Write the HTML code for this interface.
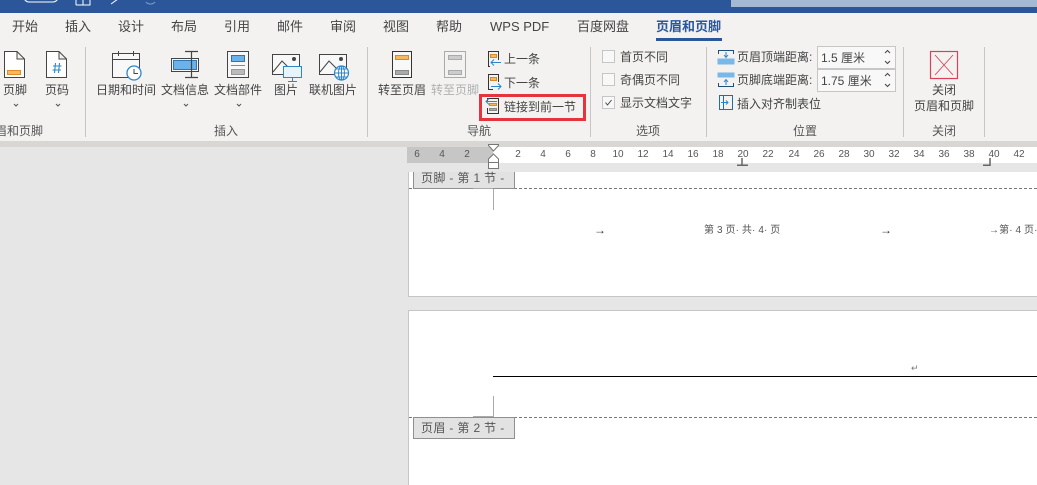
<!DOCTYPE html>
<html lang="zh"><head><meta charset="utf-8"><style>
html,body{margin:0;padding:0}
#a{position:relative;width:1037px;height:485px;overflow:hidden;background:#e6e6e6;font-family:"Liberation Sans","Noto Sans CJK SC",sans-serif;color:#444}
#a div,#a svg{position:absolute}
.t{white-space:nowrap;font-size:12px;line-height:16px;color:#444}
.c{transform:translateX(-50%)}
.tab{font-size:13px;line-height:18px;top:18px;color:#444;white-space:nowrap}
.g{color:#555;top:123px}
.sep{width:1px;top:47px;height:90px;background:#c8c6c4}
.r{font-size:10px;line-height:12px;top:149px;color:#555;transform:translateX(-50%)}
.v{background:#fff;border:1px solid #c6c6c6;box-sizing:border-box}
.cb{width:13px;height:13px;background:#f8f8f8;border:1px solid #c8c6c4;box-sizing:border-box}
svg{fill:none}
.pg{font-size:10px;line-height:14px;color:#555;white-space:nowrap}
.ar{font-size:12px;line-height:14px;color:#333;white-space:nowrap;font-weight:bold}
.lab{left:413px;width:102px;box-sizing:border-box;background:#e2e2e2;border:1px solid #8f8f8f;font-size:12px;line-height:18px;color:#555;padding-left:7px;white-space:nowrap;letter-spacing:.35px}
</style></head><body><div id="a">
<div style="left:0;top:0;width:1037px;height:13px;background:#2b579a"></div>
<div style="left:731px;top:0;width:306px;height:7px;background:#a5b9d5"></div>
<svg style="left:0;top:0" width="170" height="13" stroke="#fff"><rect x="24" y="-8" width="34" height="10" rx="5"/><path d="M76 5V0M76 5H90V0M83 5V0"/><path d="M111 4L118 -1" /><path d="M146 2a6 6 0 0 0 9 0" stroke="#7e9bc6"/></svg>

<div style="left:0;top:13px;width:1037px;height:128px;background:#f3f2f1"></div>
<div style="left:0;top:141px;width:1037px;height:6px;background:#d9d7d4"></div>

<div class="tab" style="left:12px">开始</div>
<div class="tab" style="left:65px">插入</div>
<div class="tab" style="left:118px">设计</div>
<div class="tab" style="left:171px">布局</div>
<div class="tab" style="left:224px">引用</div>
<div class="tab" style="left:277px">邮件</div>
<div class="tab" style="left:330px">审阅</div>
<div class="tab" style="left:383px">视图</div>
<div class="tab" style="left:436px">帮助</div>
<div class="tab" style="left:490px">WPS PDF</div>
<div class="tab" style="left:577px">百度网盘</div>
<div class="tab" style="left:656px;color:#2b579a;font-weight:bold">页眉和页脚</div>
<div style="left:656px;top:38px;width:66px;height:3px;background:#2b579a"></div>

<div class="sep" style="left:85px"></div><div class="sep" style="left:367px"></div><div class="sep" style="left:590px"></div><div class="sep" style="left:706px"></div><div class="sep" style="left:903px"></div><div class="sep" style="left:984px"></div>

<!-- header footer group -->
<svg style="left:0;top:48px" width="85" height="66" stroke="#444"><path d="M4.500 3.500H17L24.500 11V29.500H4.500zM17 3.500V11H24.500" fill="#fff"/><rect x="7.500" y="22.500" width="13" height="4" fill="#f5b95f" stroke="#e08a2b"/><path d="M46.500 3.500H59L66.500 11V29.500H46.500zM59 3.500V11H66.500" fill="#fff"/><path d="M55.500 15L54.500 25M59.500 15L58.500 25M53 18H61.500M52.500 22H61" stroke="#2e86c8" stroke-width="1.100"/><path d="M14 56L16 58L18 56M56 56L58 58L60 56" stroke="#555"/></svg>
<div class="t c" style="left:15px;top:82px">页脚</div>
<div class="t c" style="left:57px;top:82px">页码</div>
<div class="t g" style="left:-5px">眉和页脚</div>

<!-- insert group -->
<svg style="left:96px;top:48px" width="270" height="66" stroke="#444">
<rect x="16.500" y="5.500" width="27" height="24" fill="#f8f8f8"/><path d="M16.500 11.500H43.500M22.500 3V8M37.500 3V8"/><circle cx="38" cy="25" r="7" fill="#fff" stroke="#2e86c8" stroke-width="1.300"/><path d="M38 21V25.500H42" stroke="#444"/>
<rect x="75.500" y="10.500" width="27" height="13" fill="#f8f8f8"/><rect x="77.500" y="12.500" width="23" height="9" fill="#6cb2e8" stroke="#2e75b6"/><path d="M89 3.500H102M89 29.500H102M95.500 3.500V29.500" stroke-width="1.200"/>
<rect x="131.500" y="3.500" width="21" height="26" fill="#f8f8f8"/><rect x="135.500" y="7.500" width="13" height="6" fill="#6cb2e8" stroke="#2e75b6"/><path d="M135 17.500H149" stroke="#888"/><rect x="135.500" y="21.500" width="13" height="5" fill="#bbb" stroke="#999"/>
<rect x="176.500" y="6.500" width="27" height="20" fill="#f8f8f8"/><path d="M177 24L186 13L193 20" /><circle cx="198" cy="11" r="1.500" fill="#444"/><rect x="187.500" y="18.500" width="18" height="11" fill="#e8f3fb" stroke="#2e86c8"/><path d="M196.500 30V33M192 33.500H201" stroke="#2e86c8"/>
<rect x="223.500" y="6.500" width="27" height="20" fill="#f8f8f8"/><path d="M224 24L233 13L240 20"/><circle cx="245" cy="11" r="1.500" fill="#444"/><circle cx="245.500" cy="25" r="7" fill="#fff" stroke="#2e86c8" stroke-width="1.200"/><path d="M238.500 25H252.500M245.500 18V32M240 21H251M240 29H251" stroke="#2e86c8"/><ellipse cx="245.500" cy="25" rx="3" ry="7" stroke="#2e86c8"/>
<path d="M88 56L90 58L92 56M141 56L143 58L145 56" stroke="#555"/>
</svg>
<div class="t c" style="left:126px;top:82px">日期和时间</div>
<div class="t c" style="left:185px;top:82px">文档信息</div>
<div class="t c" style="left:238px;top:82px">文档部件</div>
<div class="t c" style="left:286px;top:82px">图片</div>
<div class="t c" style="left:333px;top:82px">联机图片</div>
<div class="t g c" style="left:226px">插入</div>

<!-- nav group -->
<svg style="left:385px;top:48px" width="110" height="50" stroke="#333">
<rect x="7.500" y="3.500" width="19" height="26" fill="#f8f8f8"/><rect x="10.500" y="7.500" width="13" height="4" fill="#f5b95f" stroke="#d9892b"/><rect x="10.500" y="22.500" width="13" height="4" fill="#aaa" stroke="#888"/>
<rect x="59.500" y="3.500" width="21" height="26" fill="#f3f2f1" stroke="#aaa"/><rect x="63.500" y="7.500" width="13" height="4" fill="#ccc" stroke="#aaa"/><rect x="63.500" y="22.500" width="13" height="4" fill="#ccc" stroke="#aaa"/>
</svg>
<div class="t c" style="left:402px;top:82px">转至页眉</div>
<div class="t c" style="left:455px;top:82px;color:#b0b0b0">转至页脚</div>
<svg style="left:485px;top:48px" width="20" height="70" stroke="#333">
<path d="M13.500 12V3.500H3.500V18.500H5"/><rect x="5.500" y="6.500" width="6" height="3" fill="#f5b95f" stroke="#d9892b"/><path d="M16 14.500H6M9 11.500L6 14.500L9 17.500" stroke="#2e86c8"/>
<path d="M13.500 34V26.500H3.500V41.500H8"/><rect x="5.500" y="29.500" width="6" height="3" fill="#f5b95f" stroke="#d9892b"/><path d="M6 38.500H16M13 35.500L16 38.500L13 41.500" stroke="#2e86c8"/>
<path d="M2.500 54V50.500H13.500V65.500H2.500V60"/><rect x="4.500" y="55.500" width="7" height="2" fill="#f5b95f" stroke="#d9892b"/><rect x="4.500" y="60.500" width="7" height="2" fill="#aaa" stroke="#888"/><path d="M12 53.500H1M4 50.500L1 53.500L4 56.500" stroke="#2e86c8"/>
</svg>
<div class="t" style="left:504px;top:51px">上一条</div>
<div class="t" style="left:504px;top:75px">下一条</div>
<div class="t" style="left:504px;top:99px">链接到前一节</div>
<div style="left:479px;top:94px;width:107px;height:27px;box-sizing:border-box;border:3px solid #e5343d"></div>
<div class="t g c" style="left:479px">导航</div>

<!-- options -->
<div class="cb" style="left:602px;top:50px"></div>
<div class="cb" style="left:602px;top:73px"></div>
<div class="cb" style="left:602px;top:96px"></div>
<svg style="left:602px;top:96px" width="13" height="13" stroke="#444"><path d="M3.500 6.500L5.500 9L9.500 4"/></svg>
<div class="t" style="left:620px;top:49px">首页不同</div>
<div class="t" style="left:620px;top:72px">奇偶页不同</div>
<div class="t" style="left:620px;top:95px">显示文档文字</div>
<div class="t g c" style="left:648px">选项</div>

<!-- position -->
<svg style="left:716px;top:47px" width="20" height="66" stroke="#1f4e79">
<path d="M2.500 7V3.500H17.500V7"/><path d="M10 5V10M8 8L10 10.500L12 8" stroke="#2e86c8"/><rect x="2" y="12" width="16" height="5" fill="#7ab8e8" stroke="#7ab8e8"/>
<rect x="2" y="26" width="16" height="4" fill="#7ab8e8" stroke="#7ab8e8"/><path d="M2.500 36V39.500H17.500V36"/><path d="M10 38V33M8 35L10 32.500L12 35" stroke="#2e86c8"/>
<rect x="3.500" y="48.500" width="13" height="14" stroke="#1f6f9f"/><path d="M7.500 49V62" stroke="#1f6f9f"/><path d="M5 55.500H12M10 53.500L12 55.500L10 57.500" stroke="#2e86c8"/>
</svg>
<div class="t" style="left:737px;top:49px">页眉顶端距离:</div>
<div class="t" style="left:737px;top:72px">页脚底端距离:</div>
<div class="t" style="left:737px;top:96px">插入对齐制表位</div>
<div class="v" style="left:817px;top:46px;width:79px;height:23px;border-color:#c8c6c4;background:#f8f8f8"></div>
<div class="v" style="left:817px;top:69px;width:79px;height:23px;border-color:#c8c6c4;background:#f8f8f8"></div>
<div class="t" style="left:821px;top:50px">1.5 厘米</div>
<div class="t" style="left:821px;top:73px">1.75 厘米</div>
<svg style="left:882px;top:48px" width="12" height="42" stroke="#444"><path d="M3 5L5.500 2.500L8 5M3 13L5.500 15.500L8 13M3 28L5.500 25.500L8 28M3 36L5.500 38.500L8 36"/></svg>
<div class="t g c" style="left:805px">位置</div>

<!-- close -->
<svg style="left:929px;top:50px" width="30" height="30" stroke="#d9415a"><rect x="1.500" y="1.500" width="27" height="27" stroke-width="1.200"/><path d="M6 5L24 25M24 5L6 25" stroke-width=".9"/></svg>
<div class="t c" style="left:944px;top:82px">关闭</div>
<div class="t c" style="left:944px;top:98px">页眉和页脚</div>
<div class="t g c" style="left:944px">关闭</div>

<!-- ruler -->
<div style="left:407px;top:147px;width:86px;height:16px;background:#c6c6c6"></div>
<div style="left:493px;top:147px;width:544px;height:16px;background:#fff"></div>
<div class="r" style="left:417px">6</div><div class="r" style="left:442px">4</div><div class="r" style="left:467px">2</div>
<div class="r" style="left:518px">2</div><div class="r" style="left:543px">4</div><div class="r" style="left:568px">6</div><div class="r" style="left:593px">8</div><div class="r" style="left:618px">10</div><div class="r" style="left:643px">12</div><div class="r" style="left:668px">14</div><div class="r" style="left:693px">16</div><div class="r" style="left:718px">18</div><div class="r" style="left:743px">20</div><div class="r" style="left:768px">22</div><div class="r" style="left:794px">24</div><div class="r" style="left:819px">26</div><div class="r" style="left:844px">28</div><div class="r" style="left:869px">30</div><div class="r" style="left:894px">32</div><div class="r" style="left:919px">34</div><div class="r" style="left:944px">36</div><div class="r" style="left:969px">38</div><div class="r" style="left:994px">40</div><div class="r" style="left:1019px">42</div>
<svg style="left:487px;top:144px" width="14" height="29" stroke="#777"><path d="M1.500 0.500H11.500V1.500L6.500 7L1.500 1.500Z" fill="#fff"/><path d="M6.500 10L11.500 15V24.500H1.500V15Z" fill="#fff"/><path d="M1.500 18.500H11.500"/></svg>
<svg style="left:735px;top:157px" width="265" height="10" stroke="#666" stroke-width="1.500"><path d="M7 1V8M2 8.250H13M255 1V8.250H248"/></svg>

<!-- page 1 -->
<div style="left:408px;top:172px;width:629px;height:125px;background:#fff;border-left:1px solid #c6c6c6;border-bottom:1px solid #c6c6c6;box-sizing:border-box"></div>
<div style="left:409px;top:188px;width:628px;height:0;border-top:1px dashed #777"></div>
<div class="lab" style="top:172px;height:17px;line-height:12px;border-top:0;padding-top:0">页脚 - 第 1 节 -</div>
<div style="left:473px;top:188px;width:20px;height:1px;background:#aaa"></div>
<div style="left:493px;top:189px;width:1px;height:21px;background:#aaa"></div>
<div class="ar" style="left:594px;top:223px">→</div>
<div class="pg" style="left:704px;top:224px;letter-spacing:.1px">第 3 页· 共· 4· 页</div>
<div class="ar" style="left:880px;top:223px">→</div>
<div class="pg" style="left:989px;top:224px;letter-spacing:.1px">→第· 4 页·</div>

<!-- page 2 -->
<div style="left:408px;top:310px;width:629px;height:175px;background:#fff;border-left:1px solid #c6c6c6;border-top:1px solid #c6c6c6;box-sizing:border-box"></div>
<div style="left:493px;top:376px;width:544px;height:1px;background:#000"></div>
<div class="pg" style="left:911px;top:361px;color:#777;font-size:9px">↵</div>
<div style="left:493px;top:396px;width:1px;height:21px;background:#aaa"></div>
<div style="left:473px;top:416px;width:20px;height:1px;background:#aaa"></div>
<div style="left:409px;top:417px;width:628px;height:0;border-top:1px dashed #777"></div>
<div class="lab" style="top:417px;height:22px;line-height:20px">页眉 - 第 2 节 -</div>
</div></body></html>
